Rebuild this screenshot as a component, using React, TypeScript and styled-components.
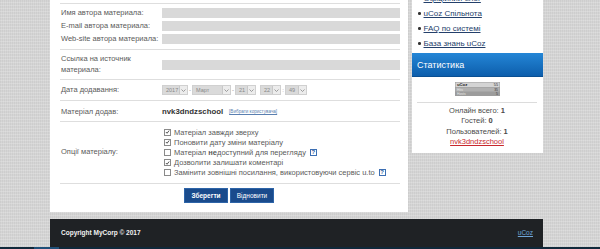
import styled, { createGlobalStyle } from 'styled-components';

const GlobalStyle = createGlobalStyle`
  html, body {
    margin: 0;
    padding: 0;
  }
  body {
    font-family: "Liberation Sans", Arial, sans-serif;
    color: #444;
  }
`;

const sideLinks = ['Офіційний блог', 'uCoz Спільнота', 'FAQ по системі', 'База знань uCoz'];

const authorRows = ['Имя автора материала:', 'E-mail автора материала:', 'Web-site автора материала:'];

const options = [
  { checked: true, text: <>Матеріал завжди зверху</> },
  { checked: true, text: <>Поновити дату зміни матеріалу</> },
  {
    checked: false,
    text: (
      <>
        Матеріал <b>не</b>доступний для перегляду
      </>
    ),
    help: true,
  },
  { checked: true, text: <>Дозволити залишати коментарі</> },
  { checked: false, text: <>Замінити зовнішні посилання, використовуючи сервіс u.to</>, help: true },
];

const Chevron = () => (
  <svg width="5" height="3" viewBox="0 0 5 3">
    <polyline points="0.5,0.5 2.5,2.5 4.5,0.5" fill="none" stroke="#888" strokeWidth="0.8" />
  </svg>
);

const Tick = () => (
  <svg width="6" height="6" viewBox="0 0 6 6">
    <polyline points="1,3 2.5,4.5 5,1.2" fill="none" stroke="#333" strokeWidth="1" />
  </svg>
);

const Counter = () => (
  <svg width="45" height="14" viewBox="0 0 45 14">
    <rect x="0" y="0" width="45" height="14" fill="#9c9c9c" />
    <rect x="0.5" y="0.5" width="44" height="4.5" fill="#d4d4d4" />
    <text x="2" y="4.2" fontSize="4.2" fontWeight="bold" fill="#222" fontFamily="Liberation Sans">uCoz</text>
    <text x="43" y="4.2" fontSize="3.8" fill="#222" textAnchor="end" fontFamily="Liberation Sans">55</text>
    <rect x="0.5" y="5.5" width="44" height="4" fill="#b0b0b0" />
    <text x="2" y="8.7" fontSize="3.4" fill="#e8e8e8" fontFamily="Liberation Sans">Hits</text>
    <text x="43" y="8.7" fontSize="3.4" fill="#333" textAnchor="end" fontFamily="Liberation Sans">35</text>
    <text x="2" y="13" fontSize="3.4" fill="#e8e8e8" fontFamily="Liberation Sans">Hosts</text>
    <text x="43" y="13" fontSize="3.4" fill="#333" textAnchor="end" fontFamily="Liberation Sans">5</text>
  </svg>
);

const DateSelect = ({ value, width }: { value: string; width: number }) => (
  <Select $width={width}>
    <span>{value}</span>
    <Arrow>
      <Chevron />
    </Arrow>
  </Select>
);

const App = () => {
  return (
    <Page>
      <GlobalStyle />
      <Wrap>
        <Columns>
          <Main>
            <Section $pad="4px 0 5px">
              <Rows>
                {authorRows.map((label) => (
                  <Row key={label}>
                    <Label>{label}</Label>
                    <Input />
                  </Row>
                ))}
              </Rows>
            </Section>
            <Section $pad="4px 0 4px">
              <Row>
                <Label $tall>
                  Ссылка на источник
                  <br />
                  материала:
                </Label>
                <Input />
              </Row>
            </Section>
            <Section $pad="5px 0 5px">
              <Row>
                <Label>Дата додавання:</Label>
                <DateRow>
                  <DateSelect value="2017" width={26} />
                  <Sep>-</Sep>
                  <DateSelect value="Март" width={39} />
                  <Sep>-</Sep>
                  <DateSelect value="21" width={21} />
                  <Sep />
                  <DateSelect value="22" width={21} />
                  <Sep>:</Sep>
                  <DateSelect value="49" width={22} />
                </DateRow>
              </Row>
            </Section>
            <Section $pad="6px 0 4px">
              <Row>
                <Label>Матеріал додав:</Label>
                <Author>
                  <b>nvk3dndzschool</b>
                  <SmallLink href="#">[Вибрати користувача]</SmallLink>
                </Author>
              </Row>
            </Section>
            <Section $pad="5px 0 5px">
              <Row>
                <Label>Опції матеріалу:</Label>
                <Options>
                  {options.map((o, i) => (
                    <Option key={i}>
                      <Check $checked={o.checked}>{o.checked && <Tick />}</Check>
                      <span>{o.text}</span>
                      {o.help && <Help>?</Help>}
                    </Option>
                  ))}
                </Options>
              </Row>
            </Section>
            <Section $pad="4px 0 0">
              <Buttons>
                <Button $primary>Зберегти</Button>
                <Button>Відновити</Button>
              </Buttons>
            </Section>
          </Main>
          <Side>
            <LinkList>
              {sideLinks.map((l) => (
                <li key={l}>
                  <a href="#">{l}</a>
                </li>
              ))}
            </LinkList>
            <BlockTitle>Статистика</BlockTitle>
            <StatsBody>
              <CounterBox>
                <Counter />
              </CounterBox>
              <StatsText>
                <div>
                  Онлайн всего: <b>1</b>
                </div>
                <div>
                  Гостей: <b>0</b>
                </div>
                <div>
                  Пользователей: <b>1</b>
                </div>
                <UserLink href="#">nvk3dndzschool</UserLink>
              </StatsText>
            </StatsBody>
          </Side>
        </Columns>
        <Footer>
          <span>Copyright MyCorp © 2017</span>
          <FooterLink href="#">uCoz</FooterLink>
        </Footer>
      </Wrap>
      <BottomStrip>
        <Accent />
      </BottomStrip>
    </Page>
  );
};

export default App;

const Page = styled.div`
  width: 600px;
  height: 249px;
  overflow: hidden;
  display: flex;
  flex-direction: column;
  background-color: #d5d5d5;
  background-image: repeating-linear-gradient(0deg, rgba(255, 255, 255, 0.18) 0 1px, transparent 1px 3px),
    repeating-linear-gradient(90deg, rgba(0, 0, 0, 0.035) 0 1px, transparent 1px 2px);
`;

const Wrap = styled.div`
  width: 493px;
  margin-left: 50px;
  flex: 1;
  display: flex;
  flex-direction: column;
`;

const Columns = styled.div`
  display: flex;
  align-items: flex-start;
  gap: 4px;
`;

const Main = styled.div`
  width: 340px;
  background: #fff;
  padding: 3px 8px 9px 10px;
  font-size: 7.5px;
`;

const Section = styled.div<{ $pad: string }>`
  border-top: 1px solid #dedede;
  padding: ${({ $pad }) => $pad};
`;

const Rows = styled.div`
  display: flex;
  flex-direction: column;
  gap: 3px;
`;

const Row = styled.div`
  display: grid;
  grid-template-columns: 102px 1fr;
  align-items: center;
  min-height: 10px;
`;

const Label = styled.div<{ $tall?: boolean }>`
  padding-left: 1px;
  line-height: ${({ $tall }) => ($tall ? '10.5px' : '10px')};
  color: #5a5a5a;
`;

const Input = styled.div`
  height: 10px;
  background: #d9d9d9;
`;

const DateRow = styled.div`
  display: flex;
  align-items: center;
`;

const Select = styled.div<{ $width: number }>`
  width: ${({ $width }) => $width}px;
  height: 10px;
  box-sizing: border-box;
  display: flex;
  align-items: center;
  justify-content: space-between;
  background: #dadada;
  border: 1px solid #d0d0d0;
  font-size: 5.5px;
  color: #888;

  span {
    padding-left: 3px;
  }
`;

const Arrow = styled.div`
  width: 7px;
  height: 8px;
  display: flex;
  align-items: center;
  justify-content: center;
  background: #ececec;
  border-left: 1px solid #c8c8c8;
`;

const Sep = styled.span`
  width: 4px;
  text-align: center;
  font-size: 6px;
  color: #888;
`;

const Author = styled.div`
  display: flex;
  align-items: center;
  gap: 6px;
  font-size: 7.8px;
  color: #333;
  line-height: 10px;
`;

const SmallLink = styled.a`
  font-size: 4.6px;
  color: #5a7fb0;
`;

const Options = styled.div`
  display: flex;
  flex-direction: column;
  padding-left: 2px;
`;

const Option = styled.div`
  height: 10.2px;
  display: flex;
  align-items: center;
  gap: 3px;
  color: #5a5a5a;
`;

const Check = styled.span<{ $checked: boolean }>`
  width: 7px;
  height: 7px;
  box-sizing: border-box;
  border: 1px solid #8a8a8a;
  background: #fff;
  display: flex;
  align-items: center;
  justify-content: center;
`;

const Help = styled.span`
  width: 7px;
  height: 7px;
  box-sizing: border-box;
  border: 1px solid #3d6fb3;
  color: #2b5aa0;
  font-size: 6px;
  font-weight: bold;
  line-height: 5px;
  text-align: center;
  margin-left: 1px;
`;

const Buttons = styled.div`
  display: flex;
  justify-content: center;
  gap: 2px;
  padding-right: 2px;
`;

const Button = styled.button<{ $primary?: boolean }>`
  width: 44px;
  height: 15px;
  padding: 0;
  border: 1px solid #2d64a8;
  background: #1a4b8c;
  color: #fff;
  font-family: inherit;
  font-size: 6.5px;
  font-weight: ${({ $primary }) => ($primary ? 'bold' : 'normal')};
`;

const Side = styled.div`
  width: 131px;
  background: #fff;
`;

const LinkList = styled.ul`
  margin: -9px 0 2px;
  padding: 0 0 0 6px;
  list-style: none;
  font-size: 8px;

  li {
    height: 15px;
    display: flex;
    align-items: center;
    gap: 3px;
  }
  li::before {
    content: '';
    width: 2.5px;
    height: 2.5px;
    border-radius: 50%;
    background: #333;
  }
  a {
    color: #24406b;
  }
`;

const BlockTitle = styled.div`
  height: 23px;
  display: flex;
  align-items: center;
  padding-left: 5px;
  color: #fff;
  font-size: 9px;
  background: linear-gradient(#2486d6, #0d5eac);
  border-bottom: 1px solid #0a4f92;
`;

const StatsBody = styled.div`
  padding: 5px 6px 6px 5px;
`;

const CounterBox = styled.div`
  display: flex;
  justify-content: center;
  padding-bottom: 6px;
  border-bottom: 1px solid #dcdcdc;
  line-height: 0;
`;

const StatsText = styled.div`
  padding-top: 3px;
  text-align: center;
  font-size: 7.5px;
  line-height: 10.3px;
  color: #4a4a4a;
`;

const UserLink = styled.a`
  color: #c8282d;
`;

const Footer = styled.div`
  margin-top: 7px;
  height: 28px;
  display: flex;
  align-items: center;
  justify-content: space-between;
  padding: 0 10px 0 11px;
  background: #1f2225;
  color: #f2f2f2;
  font-size: 6.5px;
  font-weight: bold;
`;

const FooterLink = styled.a`
  color: #6fa6d8;
  font-weight: normal;
`;

const BottomStrip = styled.div`
  height: 3px;
  background: #10283a;
  display: flex;
`;

const Accent = styled.div`
  width: 25px;
  margin-left: 34px;
  background: #1f4f78;
`;
